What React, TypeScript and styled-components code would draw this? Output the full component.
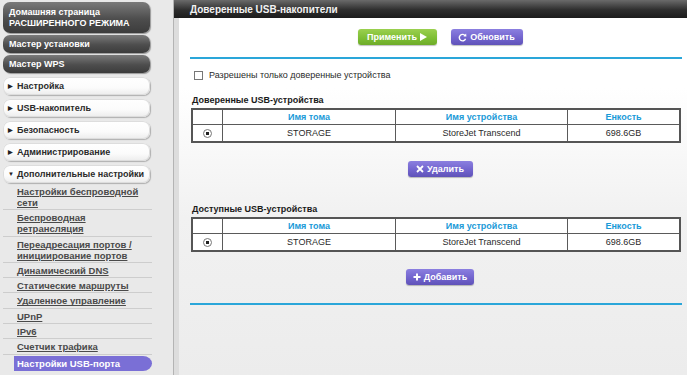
import { type FC } from 'react'
import styled, { createGlobalStyle } from 'styled-components'

const GlobalStyle = createGlobalStyle`
  html, body {
    margin: 0;
    padding: 0;
    background: #ffffff;
    font-family: "Liberation Sans", Arial, sans-serif;
  }
  #root {
    width: 687px;
    height: 375px;
    overflow: hidden;
  }
`

const Page = styled.div`
  display: flex;
  width: 687px;
  height: 375px;
  overflow: hidden;
`

const Sidebar = styled.nav`
  width: 174px;
  flex-shrink: 0;
  background: #e9e9e9;
  border-right: 1px solid #b4b4b4;
  padding: 2px 0 0 3px;
  box-sizing: border-box;
  display: flex;
  flex-direction: column;
`

const NavButton = styled.div<{ $dark?: boolean }>`
  width: 147px;
  box-sizing: border-box;
  margin-bottom: ${p => (p.$dark ? '2px' : '4px')};
  padding: ${p => (p.$dark ? '3px 6px' : '3px 5px')};
  min-height: 18px;
  border-radius: 7px;
  font-size: 9px;
  line-height: 11px;
  font-weight: bold;
  white-space: nowrap;
  display: flex;
  align-items: center;
  gap: 2px;
  color: ${p => (p.$dark ? '#ffffff' : '#2a2a2a')};
  background: ${p =>
    p.$dark
      ? 'linear-gradient(#7a7a7a, #4d4d4d 55%, #3c3c3c)'
      : 'linear-gradient(#ffffff, #fbfbfb 60%, #ececec)'};
  box-shadow: ${p =>
    p.$dark
      ? '1px 1px 1px rgba(0,0,0,0.35)'
      : '1px 1px 1px rgba(0,0,0,0.25), inset 0 0 0 1px #dddddd'};
`

const Arrow = styled.span`
  font-size: 6px;
  color: #222;
  width: 7px;
`

const SubMenu = styled.div`
  display: flex;
  flex-direction: column;
  margin-top: -3px;
  width: 149px;
`

const SubLink = styled.a<{ $active?: boolean }>`
  display: block;
  font-size: 9.5px;
  line-height: 11px;
  font-weight: bold;
  padding: ${p => (p.$active ? '2px 8px 2px 3px' : '2px 8px 1.3px 14px')};
  margin: ${p => (p.$active ? '1px 0 0 11px' : '0')};
  color: ${p => (p.$active ? '#ffffff' : '#4a4a4a')};
  text-decoration: ${p => (p.$active ? 'none' : 'underline')};
  border-bottom: ${p => (p.$active ? 'none' : '1px solid #cdcdcd')};
  background: ${p => (p.$active ? '#7a6fd6' : 'transparent')};
  border-radius: ${p => (p.$active ? '0 9px 9px 0 / 0 50% 50% 0' : '0')};
`

const Main = styled.main`
  flex: 1;
  display: flex;
  flex-direction: column;
`

const HeaderBar = styled.header`
  height: 18px;
  padding-left: 16px;
  display: flex;
  align-items: center;
  color: #f2f2f2;
  font-size: 10px;
  font-weight: bold;
  background: linear-gradient(#6a6a6a, #2e2e2e 55%, #1c1c1c);
`

const Body = styled.section`
  flex: 1;
  border-left: 5px solid #dddddd;
  padding: 0 5px 0 11px;
  background: linear-gradient(#ffffff 0px, #ffffff 70px, #f1f1f1 200px, #ececec);
  display: flex;
  flex-direction: column;
`

const ButtonRow = styled.div<{ $top: number }>`
  display: flex;
  justify-content: center;
  gap: 14px;
  margin-top: ${p => p.$top}px;
  padding-left: 8px;
`

const ActionButton = styled.button<{ $green?: boolean; $width: number }>`
  width: ${p => p.$width}px;
  height: 16px;
  border: none;
  border-radius: 3px;
  padding: 0;
  display: flex;
  align-items: center;
  justify-content: center;
  gap: 3px;
  font-family: inherit;
  font-size: 9px;
  font-weight: bold;
  color: #ffffff;
  background: ${p =>
    p.$green
      ? 'linear-gradient(#9bd04f, #7cbd33 60%, #6eab29)'
      : 'linear-gradient(#8b7fe0, #7062cc 60%, #5f52b8)'};
  box-shadow: 0 1px 1px rgba(0,0,0,0.25);
`

const BlueRule = styled.hr<{ $top: number }>`
  height: 2px;
  border: none;
  margin: ${p => p.$top}px 0 0 0;
  background: #2aa6d9;
`

const CheckRow = styled.label`
  display: flex;
  align-items: center;
  gap: 6px;
  margin: 11px 0 0 4px;
  font-size: 9px;
  color: #2a2a2a;
`

const CheckBox = styled.span`
  width: 7px;
  height: 7px;
  border: 1px solid #777;
  background: #fff;
`

const SectionTitle = styled.h3<{ $top: number }>`
  margin: ${p => p.$top}px 0 0 2px;
  font-size: 9px;
  line-height: 12px;
  font-weight: bold;
  color: #1a1a1a;
`

const DeviceTable = styled.table`
  margin: 2px 0 0 1px;
  width: 490px;
  border-collapse: collapse;
  border: 2px solid #555;
  font-size: 9px;
  table-layout: fixed;
  background: #ffffff;
`

const HeadCell = styled.th<{ $w?: number }>`
  width: ${p => (p.$w ? `${p.$w}px` : 'auto')};
  height: 14px;
  padding: 0;
  border: 1px solid #5a5a5a;
  color: #1a9ad8;
  font-weight: bold;
  text-align: center;
`

const Cell = styled.td`
  height: 16px;
  padding: 0;
  border: 1px solid #5a5a5a;
  color: #2a2a2a;
  text-align: center;
`

const Radio = styled.span`
  display: inline-block;
  width: 7px;
  height: 7px;
  border: 1px solid #777;
  border-radius: 50%;
  background: radial-gradient(circle, #222 0 1.6px, #fff 2px);
  vertical-align: middle;
`

const PlayIcon: FC = () => (
  <svg width="7" height="8" viewBox="0 0 7 8"><path d="M0 0 L7 4 L0 8 Z" fill="#fff" /></svg>
)

const RefreshIcon: FC = () => (
  <svg width="9" height="9" viewBox="0 0 10 10">
    <path d="M8.2 3.4 A3.6 3.6 0 1 0 8.4 6.4" fill="none" stroke="#fff" strokeWidth="1.6" />
    <path d="M6 3.6 L9.4 3.9 L9 0.6 Z" fill="#fff" />
  </svg>
)

const CrossIcon: FC = () => (
  <svg width="8" height="8" viewBox="0 0 8 8">
    <path d="M1 1 L7 7 M7 1 L1 7" stroke="#fff" strokeWidth="1.8" />
  </svg>
)

const PlusIcon: FC = () => (
  <svg width="8" height="8" viewBox="0 0 8 8">
    <path d="M4 0.5 V7.5 M0.5 4 H7.5" stroke="#fff" strokeWidth="2" />
  </svg>
)

const links = [
  'Настройки беспроводной сети',
  'Беспроводная ретрансляция',
  'Переадресация портов / инициирование портов',
  'Динамический DNS',
  'Статические маршруты',
  'Удаленное управление',
  'UPnP',
  'IPv6',
  'Счетчик трафика'
]

const sections = ['Настройка', 'USB-накопитель', 'Безопасность', 'Администрирование']

const UsbTable: FC = () => (
  <DeviceTable>
    <thead>
      <tr>
        <HeadCell $w={29} />
        <HeadCell $w={172}>Имя тома</HeadCell>
        <HeadCell $w={171}>Имя устройства</HeadCell>
        <HeadCell>Енкость</HeadCell>
      </tr>
    </thead>
    <tbody>
      <tr>
        <Cell><Radio /></Cell>
        <Cell>STORAGE</Cell>
        <Cell>StoreJet Transcend</Cell>
        <Cell>698.6GB</Cell>
      </tr>
    </tbody>
  </DeviceTable>
)

export default function App() {
  return (
    <Page>
      <GlobalStyle />
      <Sidebar>
        <NavButton $dark style={{ minHeight: 31 }}>Домашняя страница<br />РАСШИРЕННОГО РЕЖИМА</NavButton>
        <NavButton $dark>Мастер установки</NavButton>
        <NavButton $dark>Мастер WPS</NavButton>
        <div style={{ height: 2 }} />
        {sections.map(s => (
          <NavButton key={s}><Arrow>▶</Arrow>{s}</NavButton>
        ))}
        <NavButton><Arrow>▼</Arrow>Дополнительные настройки</NavButton>
        <SubMenu>
          {links.map(l => (
            <SubLink key={l}>{l}</SubLink>
          ))}
          <SubLink $active>Настройки USB-порта</SubLink>
        </SubMenu>
      </Sidebar>
      <Main>
        <HeaderBar>Доверенные USB-накопители</HeaderBar>
        <Body>
          <ButtonRow $top={11}>
            <ActionButton $green $width={79}>Применить <PlayIcon /></ActionButton>
            <ActionButton $width={72}><RefreshIcon /> Обновить</ActionButton>
          </ButtonRow>
          <BlueRule $top={12} />
          <CheckRow><CheckBox />Разрешены только доверенные устройства</CheckRow>
          <SectionTitle $top={14}>Доверенные USB-устройства</SectionTitle>
          <UsbTable />
          <ButtonRow $top={18}>
            <ActionButton $width={65}><CrossIcon /> Удалить</ActionButton>
          </ButtonRow>
          <SectionTitle $top={26}>Доступные USB-устройства</SectionTitle>
          <UsbTable />
          <ButtonRow $top={17}>
            <ActionButton $width={68}><PlusIcon />Добавить</ActionButton>
          </ButtonRow>
          <BlueRule $top={18} />
        </Body>
      </Main>
    </Page>
  )
}
